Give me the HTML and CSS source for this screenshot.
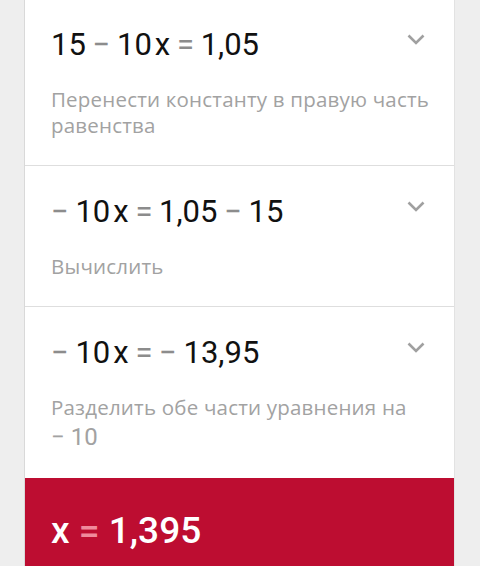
FILE: index.html
```
<!DOCTYPE html>
<html lang="ru">
<head>
<meta charset="utf-8">
<link rel="stylesheet" href="styles.css">
</head>
<body>
<div class="card">
  <div class="step">
    <div class="head">
      <div class="eq">15 <span class="op">−</span> 10<span class="var">x</span> <span class="op">=</span> 1,05</div>
      <svg class="chev" width="18" height="11" viewBox="0 0 18 11"><path d="M1.5 1.5 L9 9 L16.5 1.5" fill="none" stroke="#a0a0a0" stroke-width="2.6"/></svg>
    </div>
    <div class="hint">Перенести константу в правую часть равенства</div>
  </div>
  <div class="step">
    <div class="head">
      <div class="eq"><span class="op">−</span> 10<span class="var">x</span> <span class="op">=</span> 1,05 <span class="op">−</span> 15</div>
      <svg class="chev" width="18" height="11" viewBox="0 0 18 11"><path d="M1.5 1.5 L9 9 L16.5 1.5" fill="none" stroke="#a0a0a0" stroke-width="2.6"/></svg>
    </div>
    <div class="hint">Вычислить</div>
  </div>
  <div class="step last">
    <div class="head">
      <div class="eq"><span class="op">−</span> 10<span class="var">x</span> <span class="op">=</span> <span class="op">−</span> 13,95</div>
      <svg class="chev" width="18" height="11" viewBox="0 0 18 11"><path d="M1.5 1.5 L9 9 L16.5 1.5" fill="none" stroke="#a0a0a0" stroke-width="2.6"/></svg>
    </div>
    <div class="hint">Разделить обе части уравнения на <span class="num">− 10</span></div>
  </div>
  <div class="answer">x <span class="aop">=</span> 1,395</div>
</div>
</body>
</html>
```
FILE: styles.css
```
html, body {
  margin: 0;
  padding: 0;
  background: #eeeeee;
  height: 100%;
  overflow: hidden;
}
.card {
  margin: 0 0 0 24px;
  width: 431px;
  background: #ffffff;
  border-left: 1px solid #d9d9d9;
  border-right: 1px solid #e2e2e2;
  box-sizing: border-box;
  min-height: 600px;
}
.step {
  padding: 25px 20px 27px 26px;
  border-bottom: 1px solid #dedede;
}
.step + .step {
  padding-top: 26px;
}
.step.last {
  border-bottom: none;
  padding-bottom: 28px;
}
.head {
  display: flex;
  justify-content: space-between;
  align-items: flex-start;
}
.eq {
  font-family: Roboto, "Liberation Sans", sans-serif;
  font-size: 31px;
  line-height: 40px;
  color: #111111;
  white-space: nowrap;
  word-spacing: -1px;
}
.op {
  color: #8c8c8c;
}
.var {
  margin-left: 3px;
}
.chev {
  margin-top: 9px;
  margin-right: 9px;
  flex: none;
}
.hint {
  margin-top: 21px;
  margin-right: -12px;
  font-family: "Open Sans", "Noto Sans", sans-serif;
  font-size: 20.5px;
  letter-spacing: 0.2px;
  line-height: 26px;
  color: #a2a2a2;
}
.num {
  display: inline-block;
  margin-top: 4px;
  font-family: Roboto, sans-serif;
  font-size: 24px;
  line-height: 26px;
  letter-spacing: 0;
  white-space: nowrap;
}
.answer {
  background: #bd0d31;
  color: #ffffff;
  font-family: Roboto, "Liberation Sans", sans-serif;
  font-weight: 500;
  font-size: 37px;
  line-height: 44px;
  padding: 31px 26px 60px;
}
.aop {
  color: #f08a9c;
}
```
